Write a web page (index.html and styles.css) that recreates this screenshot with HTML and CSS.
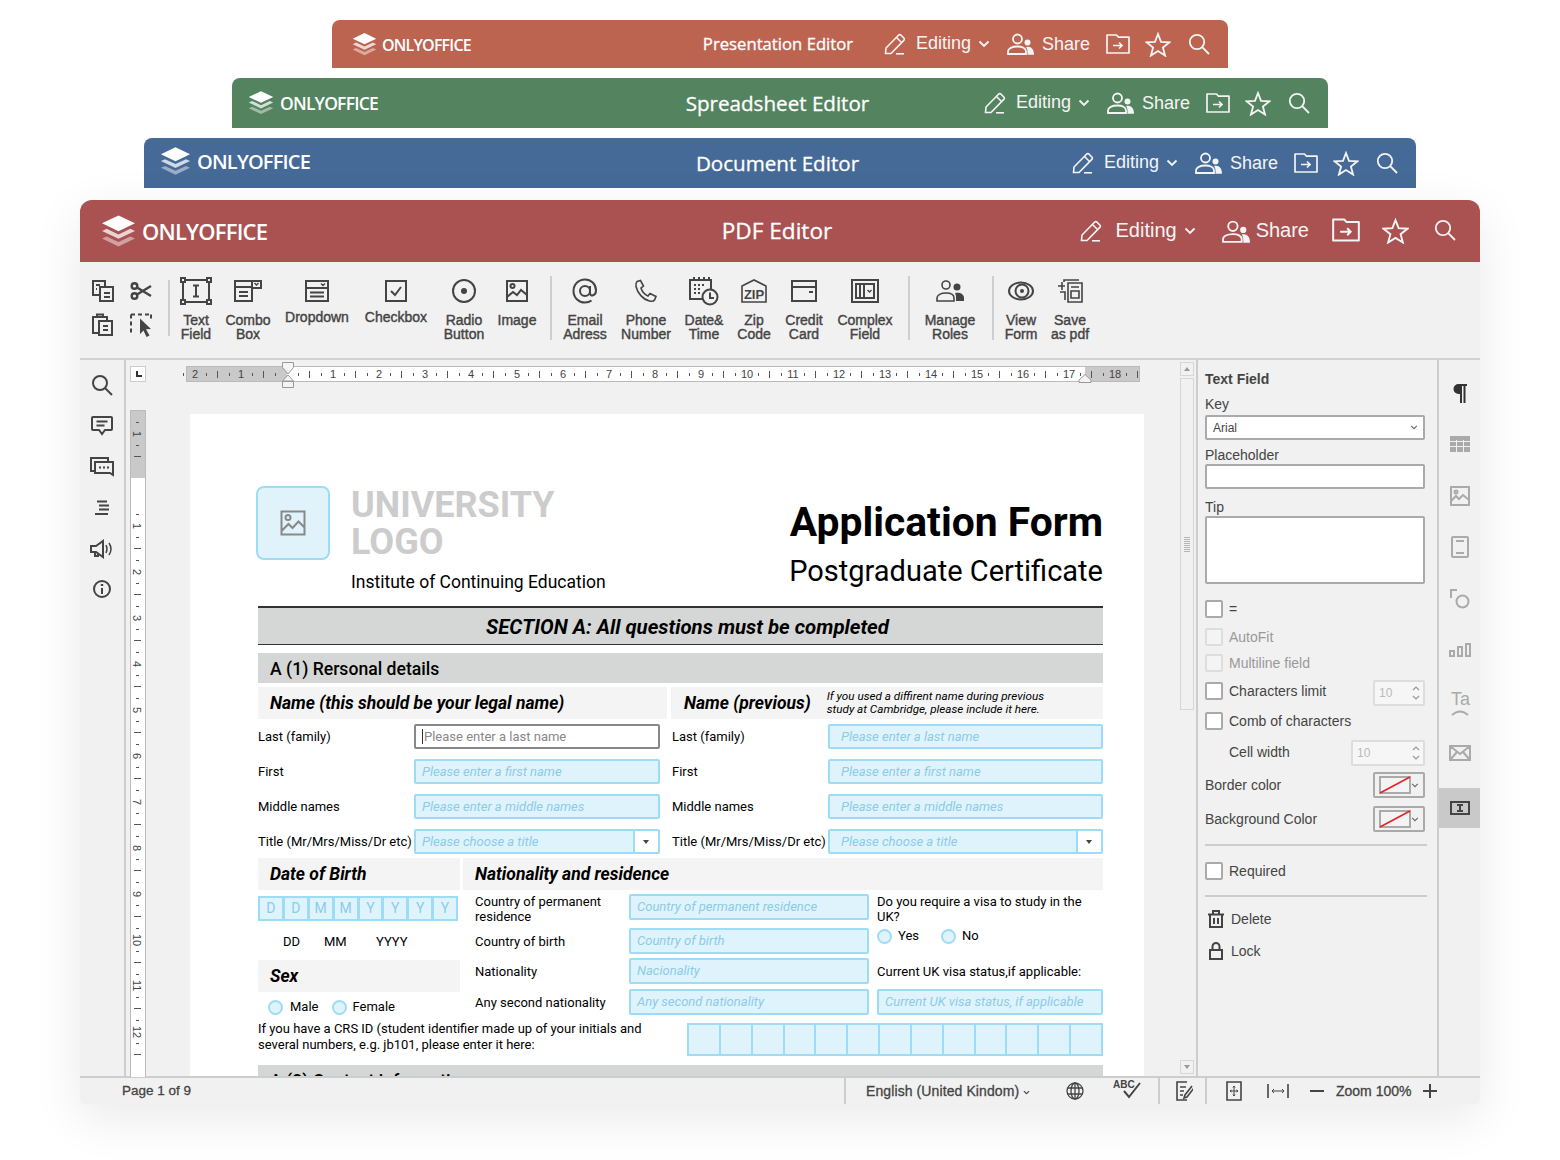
FILE: index.html
```html
<!DOCTYPE html>
<html lang="en">
<head>
    <meta charset="UTF-8">
    <title>ONLYOFFICE editors</title>
    <link rel="stylesheet" href="styles.css">
</head>
<body>
    <svg class="sprite" xmlns="http://www.w3.org/2000/svg">
        <symbol id="i-logo" viewBox="0 0 34 31">
            <path fill="#fff" d="M17 0 33 7.6 17 15.2 1 7.6z"/>
            <path fill="#fff" opacity=".75" d="M1 15 5.5 12.9 17 18.3 28.5 12.9 33 15 17 22.6z"/>
            <path fill="#fff" opacity=".45" d="M1 22.4 5.5 20.3 17 25.7 28.5 20.3 33 22.4 17 30z"/>
        </symbol>
        <symbol id="i-pen" viewBox="0 0 22 22">
            <path fill="none" stroke="currentColor" stroke-width="1.6" d="M1.5 20.5 2 15 14.5 2.2q1.300-1.200 2.600 0l2.700 2.800q1.100 1.200 0 2.400L7 20.500zM12.500 4.500l5 5"/>
            <path fill="none" stroke="currentColor" stroke-width="1.6" d="M12 20.800h8"/>
        </symbol>
        <symbol id="i-chev" viewBox="0 0 12 8">
            <path fill="none" stroke="currentColor" stroke-width="1.800" d="M1.500 1.500 6 6l4.500-4.500"/>
        </symbol>
        <symbol id="i-people" viewBox="0 0 27 22">
            <circle cx="10.500" cy="6" r="4.500" fill="none" stroke="currentColor" stroke-width="1.800"/>
            <path fill="none" stroke="currentColor" stroke-width="1.800" d="M1 21v-2.500c0-3 4-5 9.500-5 2.500 0 4.500.4 6 1.200 1.400.8 2.500 2 2.500 3.800V21z"/>
            <circle cx="20.500" cy="9.500" r="3" fill="currentColor"/>
            <path fill="currentColor" d="M19 14c5-1.200 8 2 8 7.800h-6.500V19c0-2-.5-3.600-1.500-5z"/>
        </symbol>
        <symbol id="i-folder" viewBox="0 0 24 20">
            <path fill="none" stroke="currentColor" stroke-width="1.700" stroke-linejoin="round" d="M1 1h9.500l2 2.200H23V19H1z"/>
            <path fill="none" stroke="currentColor" stroke-width="1.700" d="M7 11.500h9M13 8.500l3 3-3 3"/>
        </symbol>
        <symbol id="i-star" viewBox="0 0 26 25">
            <path fill="none" stroke="currentColor" stroke-width="1.800" d="M13 2l3 7.800 8.500.5-6.600 5.300 2.200 8L13 19.100 5.900 23.600l2.200-8L1.500 10.300l8.500-.5z"/>
        </symbol>
        <symbol id="i-search" viewBox="0 0 22 22">
            <circle cx="9" cy="9" r="7.200" fill="none" stroke="currentColor" stroke-width="1.800"/>
            <path fill="none" stroke="currentColor" stroke-width="1.800" d="M14.200 14.200 21 21"/>
        </symbol>
    </svg>

    <div class="stage">
        <header class="bar bar-slides">
            <div class="brand"><svg class="brand-mark"><use href="#i-logo"/></svg><span class="brand-name">ONLYOFFICE</span></div>
            <div class="bar-title">Presentation Editor</div>
            <div class="bar-actions">
                <svg class="a-pen"><use href="#i-pen"/></svg><span class="a-edit">Editing</span><svg class="a-chev"><use href="#i-chev"/></svg>
                <svg class="a-people"><use href="#i-people"/></svg><span class="a-share">Share</span>
                <svg class="a-folder"><use href="#i-folder"/></svg><svg class="a-star"><use href="#i-star"/></svg><svg class="a-search"><use href="#i-search"/></svg>
            </div>
        </header>
        <header class="bar bar-cells">
            <div class="brand"><svg class="brand-mark"><use href="#i-logo"/></svg><span class="brand-name">ONLYOFFICE</span></div>
            <div class="bar-title">Spreadsheet Editor</div>
            <div class="bar-actions">
                <svg class="a-pen"><use href="#i-pen"/></svg><span class="a-edit">Editing</span><svg class="a-chev"><use href="#i-chev"/></svg>
                <svg class="a-people"><use href="#i-people"/></svg><span class="a-share">Share</span>
                <svg class="a-folder"><use href="#i-folder"/></svg><svg class="a-star"><use href="#i-star"/></svg><svg class="a-search"><use href="#i-search"/></svg>
            </div>
        </header>
        <header class="bar bar-docs">
            <div class="brand"><svg class="brand-mark"><use href="#i-logo"/></svg><span class="brand-name">ONLYOFFICE</span></div>
            <div class="bar-title">Document Editor</div>
            <div class="bar-actions">
                <svg class="a-pen"><use href="#i-pen"/></svg><span class="a-edit">Editing</span><svg class="a-chev"><use href="#i-chev"/></svg>
                <svg class="a-people"><use href="#i-people"/></svg><span class="a-share">Share</span>
                <svg class="a-folder"><use href="#i-folder"/></svg><svg class="a-star"><use href="#i-star"/></svg><svg class="a-search"><use href="#i-search"/></svg>
            </div>
        </header>

        <div class="window">
            <header class="bar bar-pdf">
                <div class="brand"><svg class="brand-mark"><use href="#i-logo"/></svg><span class="brand-name">ONLYOFFICE</span></div>
                <div class="bar-title">PDF Editor</div>
                <div class="bar-actions">
                    <svg class="a-pen"><use href="#i-pen"/></svg><span class="a-edit">Editing</span><svg class="a-chev"><use href="#i-chev"/></svg>
                    <svg class="a-people"><use href="#i-people"/></svg><span class="a-share">Share</span>
                    <svg class="a-folder"><use href="#i-folder"/></svg><svg class="a-star"><use href="#i-star"/></svg><svg class="a-search"><use href="#i-search"/></svg>
                </div>
            </header>

            <!-- toolbar -->
            <div class="toolbar">
                <div class="clip-tools">
                    <svg width="22" height="24" viewBox="0 0 22 24" class="ic"><path d="M7 16H1V2h12v5M4 6h4M4 10h1"/><path d="M8 8h13v14H8zM12 14h6M12 18h6"/></svg>
                    <svg width="22" height="24" viewBox="0 0 22 24" class="ic ic-bold"><circle cx="4.500" cy="7" r="2.800"/><circle cx="4.500" cy="17" r="2.800"/><path d="M7 8.500 21 17M7 15.500 21 7"/></svg>
                    <svg width="22" height="24" viewBox="0 0 22 24" class="ic"><path d="M6 20H1V4h14v3M5 4V1.500h6V4"/><path d="M7 8h13v14H7zM11 13h5M11 17h5"/></svg>
                    <svg width="22" height="24" viewBox="0 0 22 24" class="ic"><path stroke-dasharray="4 3" d="M1 1.500h20M1 1.500V20M21 1.500v5"/><path class="fill" d="M10 5.500l11 10.500-5 .3 3.500 6.200-3 1.500-3-6.500L10 21z"/></svg>
                </div>
                <span class="tb-sep tb-sep-first"></span>
                <div class="tools tools-fields">
                    <div class="tool">
                        <div class="tool-ic"><svg width="32" height="28" viewBox="0 0 32 28" class="ic"><path d="M4 3h24M4 25h24M3 4v20M29 4v20"/><path d="M1 1h4v4H1zM27 1h4v4h-4zM1 23h4v4H1zM27 23h4v4h-4z"/><path d="M16 9v10M13 8.500h6M13 19.500h6"/></svg></div>
                        <span class="tool-label">Text<br>Field</span>
                    </div>
                    <div class="tool">
                        <div class="tool-ic"><svg width="28" height="22" viewBox="0 0 28 22" class="ic"><path d="M1 7h17v14H1zM18 7V1h9v7h-9M5 12h9M5 16h9"/><path d="M8 1h10v6H1V1h7"/><path stroke-width="1.400" d="M20.500 3l2 2 2-2"/></svg></div>
                        <span class="tool-label">Combo<br>Box</span>
                    </div>
                    <div class="tool tool-flat">
                        <div class="tool-ic"><svg width="24" height="22" viewBox="0 0 24 22" class="ic"><path d="M1 1h22v20H1zM1 8h22M5 12.500h14M5 16.500h14"/><path stroke-width="1.400" d="M16 3.500l2 2 2-2"/></svg></div>
                        <span class="tool-label">Dropdown</span>
                    </div>
                    <div class="tool tool-flat">
                        <div class="tool-ic"><svg width="22" height="22" viewBox="0 0 22 22" class="ic"><path d="M1 1h20v20H1zM6 11l4 4 6-8"/></svg></div>
                        <span class="tool-label">Checkbox</span>
                    </div>
                    <div class="tool">
                        <div class="tool-ic"><svg width="24" height="24" viewBox="0 0 24 24" class="ic"><circle cx="12" cy="12" r="11"/><circle class="fill" cx="12" cy="12" r="3"/></svg></div>
                        <span class="tool-label">Radio<br>Button</span>
                    </div>
                    <div class="tool">
                        <div class="tool-ic"><svg width="22" height="22" viewBox="0 0 22 22" class="ic"><path d="M1 1h20v20H1zM1 17l6-5 4 3 4-5 6 5"/><circle cx="6.500" cy="6" r="2"/></svg></div>
                        <span class="tool-label">Image</span>
                    </div>
                </div>
                <span class="tb-sep"></span>
                <div class="tools tools-data">
                    <div class="tool">
                        <div class="tool-ic"><svg width="26" height="26" viewBox="0 0 26 26" class="ic"><circle cx="13" cy="13" r="5"/><path d="M18 8v7c0 4 6 3 6-2.500C24 6 19 1.500 13 1.500 6.500 1.500 1.500 6.500 1.500 13S6.500 24.500 13 24.500c2.500 0 4.500-.5 6.500-2"/></svg></div>
                        <span class="tool-label">Email<br>Adress</span>
                    </div>
                    <div class="tool">
                        <div class="tool-ic"><svg width="24" height="24" viewBox="0 0 24 24" class="ic ic-thin"><path d="M3 2.500 6.500 1.500l3 5.500-2.500 2c1 3.500 3.500 6.500 7 8l2-2.500 6 3-1.500 3.500c-1 1.500-3 1.500-5 1C9 20.500 3.500 14 2 7.500 1.700 5.500 2 3.500 3 2.500z"/></svg></div>
                        <span class="tool-label">Phone<br>Number</span>
                    </div>
                    <div class="tool">
                        <div class="tool-ic"><svg width="30" height="30" viewBox="0 0 30 30" class="ic"><path d="M13 23H1V4h21v9M5 1v3M10 1v3M15 1v3M20 1v3"/><path stroke-dasharray="2 2" d="M5 9h11M5 13h8M5 17h6"/><circle cx="21" cy="21" r="7.500"/><path d="M21 16.500V22h4"/></svg></div>
                        <span class="tool-label">Date&amp;<br>Time</span>
                    </div>
                    <div class="tool">
                        <div class="tool-ic"><svg width="26" height="26" viewBox="0 0 26 26" class="ic ic-thin"><path d="M1 8l12-6 12 6v16H1z"/><text x="13" y="21" class="ic-text">ZIP</text></svg></div>
                        <span class="tool-label">Zip<br>Code</span>
                    </div>
                    <div class="tool">
                        <div class="tool-ic"><svg width="26" height="22" viewBox="0 0 26 22" class="ic"><path d="M1 1h24v20H1zM1 7h24M18 12h4"/></svg></div>
                        <span class="tool-label">Credit<br>Card</span>
                    </div>
                    <div class="tool">
                        <div class="tool-ic"><svg width="28" height="24" viewBox="0 0 28 24" class="ic"><path d="M1 1h26v22H1zM5 5h18v14H5zM9 5v14M13 5v14"/><path stroke-width="1.400" d="M16.500 11l2 2 2-2"/></svg></div>
                        <span class="tool-label">Complex<br>Field</span>
                    </div>
                </div>
                <span class="tb-sep"></span>
                <div class="tools tools-roles">
                    <div class="tool">
                        <div class="tool-ic"><svg width="30" height="24" viewBox="0 0 30 24" class="ic ic-thin"><circle cx="11" cy="6" r="4"/><path d="M2 22v-3c0-3 4-5 9-5s8 2 8 5v3z"/><circle class="fill" cx="22" cy="8" r="3.500"/><path class="fill" d="M20 14c5-1 9 1 9 5v3h-8v-4c0-1.500-.5-3-1-4z"/></svg></div>
                        <span class="tool-label">Manage<br>Roles</span>
                    </div>
                </div>
                <span class="tb-sep"></span>
                <div class="tools tools-view">
                    <div class="tool">
                        <div class="tool-ic"><svg width="26" height="20" viewBox="0 0 26 20" class="ic"><ellipse cx="13" cy="10" rx="12" ry="8.500"/><circle cx="14" cy="10" r="6.500"/><circle class="fill" cx="14" cy="10" r="2"/></svg></div>
                        <span class="tool-label">View<br>Form</span>
                    </div>
                    <div class="tool">
                        <div class="tool-ic"><svg width="26" height="24" viewBox="0 0 26 24" class="ic ic-thin"><path d="M7 3V1h15M11 4h14v19H11zM14 8h8M14 12h8v7h-8zM1 7h7M5 3v8M3 13h5v8"/></svg></div>
                        <span class="tool-label">Save<br>as pdf</span>
                    </div>
                </div>
            </div>

            <div class="workspace">
                <nav class="left-rail">
                    <svg width="22" height="22" viewBox="0 0 22 22" class="ic"><circle cx="9" cy="9" r="7"/><path d="M14 14l7 7"/></svg>
                    <svg width="22" height="20" viewBox="0 0 22 20" class="ic"><path d="M2 1h18q1 0 1 1v11q0 1-1 1h-6l-3 4-3-4H2q-1 0-1-1V2q0-1 1-1zM5.500 5.500h11M5.500 9.500h8"/></svg>
                    <svg width="24" height="20" viewBox="0 0 24 20" class="ic"><path d="M4 14H1V1h17v3"/><path d="M5 5h18v13l-3-2H5z"/><path stroke-dasharray="2 2" d="M9 10.500h11"/></svg>
                    <svg width="16" height="16" viewBox="0 0 16 16" class="ic"><path d="M3 1.500h10M5 5.500h10M5 9.500h10M1 14h13"/></svg>
                    <svg width="24" height="20" viewBox="0 0 24 20" class="ic"><path d="M1 7h5l7-5v16l-7-5H1zM5 13v4h3v-3"/><path stroke-width="1.500" d="M16 6q2 4 0 8M19 4q4 6 0 12"/></svg>
                    <svg width="18" height="18" viewBox="0 0 18 18" class="ic"><circle cx="9" cy="9" r="8"/><path d="M9 8v6"/><path stroke-width="2.400" d="M9 4v2"/></svg>
                </nav>

                <div class="ruler-col">
                    <div class="ruler-corner"><span class="corner-mark"></span></div>
                    <div class="ruler-v">
                        <span>1</span><span></span><span>1</span><span>2</span><span>3</span><span>4</span><span>5</span><span>6</span><span>7</span><span>8</span><span>9</span><span>10</span><span>11</span><span>12</span>
                    </div>
                </div>

                <div class="doc-col">
                    <div class="ruler-h">
                        <span>2</span><span>1</span><span></span><span>1</span><span>2</span><span>3</span><span>4</span><span>5</span><span>6</span><span>7</span><span>8</span><span>9</span><span>10</span><span>11</span><span>12</span><span>13</span><span>14</span><span>15</span><span>16</span><span>17</span><span>18</span>
                        <svg class="indent-left" width="14" height="26" viewBox="0 0 14 26"><path fill="#f4f4f4" stroke="#999" d="M1.500 .5h11v5L7 12 1.500 5.500zM7 13l5.500 6h-11zM1.500 19.500h11v6h-11z"/></svg>
                        <svg class="indent-right" width="14" height="9" viewBox="0 0 14 9"><path fill="#f4f4f4" stroke="#999" d="M7 .5 13 6v2.500H1V6z"/></svg>
                    </div>

                    <!-- form page -->
                    <main class="page">
                        <div class="form-head">
                            <div class="head-left">
                                <div class="logo-box">
                                    <svg width="26" height="26" viewBox="0 0 26 26" class="logo-pic"><path d="M1.500 1.500h23v23h-23zM1.500 21l7-7 4 4 6-6.500 6 6"/><circle cx="8" cy="7.500" r="2.500"/></svg>
                                </div>
                                <div class="head-text">
                                    <div class="uni">UNIVERSITY<br>LOGO</div>
                                    <div class="institute">Institute of Continuing Education</div>
                                </div>
                            </div>
                            <div class="head-right">
                                <h1>Application Form</h1>
                                <p>Postgraduate Certificate</p>
                            </div>
                        </div>

                        <div class="section-a">SECTION A: All questions must be completed</div>
                        <div class="subsection">A (1) Rersonal details</div>

                        <div class="names">
                            <div class="names-col names-left">
                                <div class="sub-head">Name (this should be your legal name)</div>
                                <div class="f-row"><label>Last (family)</label><div class="fld fld-active"><span class="caret"></span>Please enter a last name</div></div>
                                <div class="f-row"><label>First</label><div class="fld">Please enter a first name</div></div>
                                <div class="f-row"><label>Middle names</label><div class="fld">Please enter a middle names</div></div>
                                <div class="f-row"><label>Title (Mr/Mrs/Miss/Dr etc)</label><div class="fld fld-select">Please choose a title<span class="fld-btn"></span></div></div>
                            </div>
                            <div class="names-col names-right">
                                <div class="sub-head sub-head-note">Name (previous)<small>If you used a diffirent name during previous<br>study at Cambridge, please include it here.</small></div>
                                <div class="f-row"><label>Last (family)</label><div class="fld">Please enter a last name</div></div>
                                <div class="f-row"><label>First</label><div class="fld">Please enter a first name</div></div>
                                <div class="f-row"><label>Middle names</label><div class="fld">Please enter a middle names</div></div>
                                <div class="f-row"><label>Title (Mr/Mrs/Miss/Dr etc)</label><div class="fld fld-select">Please choose a title<span class="fld-btn"></span></div></div>
                            </div>
                        </div>

                        <div class="details">
                            <div class="dob-col">
                                <div class="sub-head">Date of Birth</div>
                                <div class="dob-cells"><span>D</span><span>D</span><span>M</span><span>M</span><span>Y</span><span>Y</span><span>Y</span><span>Y</span></div>
                                <div class="dob-legend"><span>DD</span><span>MM</span><span>YYYY</span></div>
                                <div class="sub-head sex-head">Sex</div>
                                <div class="radios sex-radios"><span class="radio"></span>Male<span class="radio"></span>Female</div>
                            </div>
                            <div class="nat-col">
                                <div class="sub-head">Nationality and residence</div>
                                <div class="nat-grid">
                                    <label>Country of permanent residence</label>
                                    <div class="fld">Country of permanent residence</div>
                                    <div class="visa-q">Do you require a visa to study in the UK?</div>

                                    <label>Country of birth</label>
                                    <div class="fld">Country of birth</div>
                                    <div class="radios visa-radios"><span class="radio"></span>Yes<span class="radio"></span>No</div>

                                    <label>Nationality</label>
                                    <div class="fld">Nacionality</div>
                                    <div class="visa-q">Current UK visa status,if applicable:</div>

                                    <label>Any second nationality</label>
                                    <div class="fld">Any second nationality</div>
                                    <div class="fld">Current UK visa status, if applicable</div>
                                </div>
                            </div>
                        </div>

                        <div class="crs">
                            <p>If you have a CRS ID (student identifier made up of your initials and<br>several numbers, e.g. jb101, please enter it here:</p>
                            <div class="crs-cells"><span></span><span></span><span></span><span></span><span></span><span></span><span></span><span></span><span></span><span></span><span></span><span></span><span></span></div>
                        </div>
                        <div class="subsection subsection-next">A (2) Contact information</div>
                    </main>
                </div>

                <div class="scroll-col">
                    <span class="scroll-btn"><svg width="6" height="4" viewBox="0 0 6 4"><path fill="#999" d="M3 0l3 4H0z"/></svg></span>
                    <div class="scroll-thumb"><span class="scroll-grip"></span></div>
                    <span class="scroll-btn scroll-btn-down"><svg width="6" height="4" viewBox="0 0 6 4"><path fill="#999" d="M3 4 0 0h6z"/></svg></span>
                </div>

                <aside class="panel">
                    <div class="panel-title">Text Field</div>
                    <div class="p-label p-key">Key</div>
                    <div class="p-input p-select">Arial<svg width="8" height="5" viewBox="0 0 12 8" class="p-chev"><use href="#i-chev"/></svg></div>
                    <div class="p-label p-ph">Placeholder</div>
                    <div class="p-input"></div>
                    <div class="p-label p-tip">Tip</div>
                    <div class="p-input p-area"></div>

                    <div class="check m16"><span class="cb"></span>=</div>
                    <div class="check check-off m10"><span class="cb"></span>AutoFit</div>
                    <div class="check check-off m8"><span class="cb"></span>Multiline field</div>
                    <div class="p-row m8">
                        <div class="check check-inset"><span class="cb"></span>Characters limit</div>
                        <div class="spin spin-short">10<svg width="8" height="16" viewBox="0 0 8 16"><path d="M1 5l3-3 3 3M1 11l3 3 3-3"/></svg></div>
                    </div>
                    <div class="check m6"><span class="cb"></span>Comb of characters</div>
                    <div class="p-row m10">
                        <span class="p-indent">Cell width</span>
                        <div class="spin">10<svg width="8" height="16" viewBox="0 0 8 16"><path d="M1 5l3-3 3 3M1 11l3 3 3-3"/></svg></div>
                    </div>
                    <div class="p-row m6">
                        <span>Border color</span>
                        <div class="color-btn"><svg width="32" height="18" viewBox="0 0 32 18"><path fill="#f4f4f4" stroke="#aaa" stroke-width="2" d="M1 1h30v16H1z"/><path stroke="#e0252b" stroke-width="1.600" d="M1 17 31 1"/></svg><svg width="8" height="5" viewBox="0 0 12 8" class="p-chev"><use href="#i-chev"/></svg></div>
                    </div>
                    <div class="p-row m8">
                        <span>Background Color</span>
                        <div class="color-btn"><svg width="32" height="18" viewBox="0 0 32 18"><path fill="#f4f4f4" stroke="#aaa" stroke-width="2" d="M1 1h30v16H1z"/><path stroke="#e0252b" stroke-width="1.600" d="M1 17 31 1"/></svg><svg width="8" height="5" viewBox="0 0 12 8" class="p-chev"><use href="#i-chev"/></svg></div>
                    </div>
                    <div class="p-rule m12"></div>
                    <div class="check m16"><span class="cb"></span>Required</div>
                    <div class="p-rule m15"></div>
                    <div class="p-action m12"><svg width="16" height="18" viewBox="0 0 16 18" class="ic"><path d="M0 4.500h16M2 4.500V17h12V4.500M5 4V1h6v3M6 8v6M10 8v6"/></svg>Delete</div>
                    <div class="p-action m12"><svg width="16" height="18" viewBox="0 0 16 18" class="ic"><path d="M2 8h12v9H2zM4.500 8V4.500a3.500 3.500 0 0 1 7 0V8"/></svg>Lock</div>
                </aside>

                <nav class="right-tabs">
                    <div class="tab"><svg width="16" height="20" viewBox="0 0 16 20"><path fill="#333" d="M6.500 1H15v2h-1.500v17h-2V3H10v17H8V11H6.500a5 5 0 0 1 0-10z"/></svg></div>
                    <div class="tab"><svg width="20" height="16" viewBox="0 0 20 16" class="tab-ic"><path class="tab-fill" d="M0 0h20v16H0z"/><path stroke="#f1f1f1" stroke-width="1" d="M0 5.500h20M0 10.500h20M6.500 4v12M13.500 4v12"/></svg></div>
                    <div class="tab"><svg width="20" height="20" viewBox="0 0 20 20" class="tab-ic"><path d="M1 1h18v18H1zM1 15l5-5 3 3 4-4 6 5"/><circle cx="6" cy="6" r="1.500"/></svg></div>
                    <div class="tab"><svg width="18" height="22" viewBox="0 0 18 22" class="tab-ic"><path d="M2 1h14q1 0 1 1v18q0 1-1 1H2q-1 0-1-1V2q0-1 1-1zM5 5h8M5 17h8"/></svg></div>
                    <div class="tab"><svg width="20" height="20" viewBox="0 0 20 20" class="tab-ic"><path d="M7 1H1v8"/><circle cx="12.500" cy="12.500" r="6"/></svg></div>
                    <div class="tab"><svg width="22" height="14" viewBox="0 0 22 14" class="tab-ic"><path d="M1 8h4v5H1zM9 4h4v9H9zM17 1h4v12h-4z"/></svg></div>
                    <div class="tab"><svg width="24" height="28" viewBox="0 0 24 28" class="tab-ic"><text x="3" y="17" class="tab-text">Ta</text><path d="M4 27q8-7 16 0"/></svg></div>
                    <div class="tab"><svg width="22" height="16" viewBox="0 0 22 16" class="tab-ic"><path d="M1 1h20v14H1zM1 1l10 8 10-8M1 15l7-8M21 15l-7-8"/></svg></div>
                    <div class="tab tab-active"><svg width="20" height="14" viewBox="0 0 20 14" class="ic"><path d="M1 1h18v12H1zM7 4h6M7 10h6M10 4v6"/></svg></div>
                </nav>
            </div>

            <footer class="status">
                <span class="st-pages">Page 1 of 9</span>
                <span class="st-lang">English (United Kindom)<svg width="7" height="5" viewBox="0 0 12 8"><use href="#i-chev"/></svg></span>
                <svg width="18" height="18" viewBox="0 0 18 18" class="ic ic-globe st-globe"><circle cx="9" cy="9" r="8"/><ellipse cx="9" cy="9" rx="4" ry="8"/><path d="M9 1v16M1.500 6h15M1.500 12h15"/></svg>
                <svg width="30" height="22" viewBox="0 0 30 22" class="ic st-spell"><text x="1" y="10" class="spell-text">ABC</text><path d="M12 13l5 6L28 5"/></svg>
                <span class="st-cell st-review"><svg width="18" height="20" viewBox="0 0 18 20" class="ic ic-thin"><path d="M12 1H2v18h10M5 6h6M5 10h4M5 14h3M17 5l-7 9-1 3 3-1 7-9"/></svg></span>
                <span class="st-cell st-zoom">
                    <svg width="16" height="20" viewBox="0 0 16 20" class="ic ic-thin st-fit"><path d="M1 1h14v18H1z"/><path stroke-width="1" d="M8 5v10M4 10h8M7 6.500 8 5l1 1.500M7 13.500 8 15l1-1.500M5.500 9 4 10l1.500 1M10.500 9 12 10l-1.500 1"/></svg>
                    <svg width="22" height="14" viewBox="0 0 22 14" class="ic ic-thin st-width"><path d="M1 0v14M21 0v14"/><path stroke-width="1" d="M5 7h12M7 5 5 7l2 2M15 5l2 2-2 2"/></svg>
                    <svg width="14" height="2" viewBox="0 0 14 2" class="ic st-minus"><path d="M0 1h14"/></svg>
                    <span class="st-zoom-text">Zoom 100%</span>
                    <svg width="14" height="14" viewBox="0 0 14 14" class="ic st-plus"><path d="M0 7h14M7 0v14"/></svg>
                </span>
            </footer>
        </div>
    </div>
</body>
</html>
```
FILE: styles.css
```css
body {
    margin: 0;
    background: #fff;
    font-family: "Liberation Sans", Arial, sans-serif;
    color: #444;
}
.sprite {
    display: none;
}
.stage {
    height: 1160px;
    overflow: hidden;
    padding-top: 20px;
    box-sizing: border-box;
    display: flex;
    flex-direction: column;
    align-items: center;
}

/* title bars */
.bar {
    display: grid;
    grid-template-columns: 1fr auto 1fr;
    align-items: center;
    color: #fff;
    border-radius: 8px 8px 0 0;
    box-sizing: border-box;
    flex: none;
}
.bar svg {
    flex: none;
    display: block;
}
.brand {
    display: flex;
    align-items: center;
}
.brand-name {
    font-family: "Open Sans", sans-serif;
    font-weight: 600;
    letter-spacing: -.8px;
}
.bar-title {
    font-family: "Open Sans", sans-serif;
    font-size: 20.600px;
    margin: -1px 3px 0 0;
    -webkit-text-stroke: .3px #fff;
}
.bar-actions {
    display: flex;
    justify-content: flex-end;
    align-items: center;
    color: #f4f4f4;
    font-size: 18px;
}
.a-pen { width: 22px; height: 22px; }
.a-edit { margin: -2px 0 0 10px; }
.a-chev { width: 12px; height: 8px; margin-left: 7px; }
.a-people { width: 27px; height: 22px; margin-left: 17px; }
.a-share { margin-left: 8px; }
.a-folder { width: 24px; height: 20px; margin-left: 16px; }
.a-star { width: 26px; height: 25px; margin-left: 15px; }
.a-search { width: 22px; height: 22px; margin-left: 17px; }

.bar-slides {
    width: 896px;
    height: 48px;
    padding: 0 18px 0 20px;
    background: #bc6450;
}
.bar-slides .brand { margin-top: 1px; }
.bar-slides .brand-mark { width: 25px; height: 23px; margin-right: 5px; }
.bar-slides .brand-name { font-size: 16px; }
.bar-slides .bar-title { font-size: 16.700px; margin-right: 6px; }
.bar-cells {
    width: 1096px;
    height: 50px;
    margin-top: 10px;
    padding: 0 18px 0 16px;
    background: #54845f;
}
.bar-cells .brand-mark { width: 26px; height: 24px; margin-right: 6px; }
.bar-cells .brand-name { font-size: 17.500px; }
.bar-docs {
    width: 1272px;
    height: 50px;
    margin-top: 10px;
    padding: 0 18px 0 16px;
    background: #466a97;
}
.bar-docs .brand { margin-top: -3px; }
.bar-docs .brand-mark { width: 31px; height: 29px; margin-right: 6px; }
.bar-docs .brand-name { font-size: 20px; }

/* pdf window */
.window {
    width: 1400px;
    margin-top: 12px;
    background: #f1f1f1;
    border-radius: 12px 12px 4px 4px;
    box-shadow: 0 14px 50px rgba(0, 0, 0, .09);
    flex: none;
}
.bar-pdf {
    height: 62px;
    padding: 0 24px 0 21px;
    background: #aa5252;
    border-radius: 12px 12px 0 0;
}
.bar-pdf .brand-mark { width: 35px; height: 33px; margin-right: 6px; }
.bar-pdf .brand-name { font-size: 22px; }
.bar-pdf .bar-title { font-size: 22.600px; }
.bar-pdf .bar-actions { font-size: 20px; }
.bar-pdf .a-edit { margin-left: 13px; }
.bar-pdf .a-people { width: 28px; height: 23px; margin-left: 26px; }
.bar-pdf .a-share { margin-left: 6px; margin-top: -2px; }
.bar-pdf .a-folder { width: 28px; height: 24px; margin: -2px 0 0 23px; }
.bar-pdf .a-star { width: 27px; height: 26px; margin-left: 22px; }
.bar-pdf .a-search { margin: -2px 0 0 25px; }

/* icons */
.ic {
    flex: none;
    fill: none;
    stroke: #444;
    stroke-width: 2;
}
.ic-thin { stroke-width: 1.600; }
.ic-bold { stroke-width: 2.400; }
.ic-globe { stroke-width: 1.300; }
.ic .fill { fill: #444; stroke: none; }
.ic-text {
    font-family: "Liberation Sans", sans-serif;
    font-size: 13px;
    font-weight: 700;
    text-anchor: middle;
    fill: #444;
    stroke: none;
}

/* toolbar */
.toolbar {
    height: 98px;
    box-sizing: border-box;
    border-bottom: 2px solid #d2d2d2;
    padding: 16px 0 0 12px;
    display: flex;
    align-items: flex-start;
}
.clip-tools {
    display: grid;
    grid-template-columns: 22px 22px;
    column-gap: 16px;
    row-gap: 10px;
    margin-top: 1px;
    margin-right: 9px;
}
.tb-sep {
    width: 2px;
    height: 64px;
    margin: -2px 5px 0 7px;
    background: #cecece;
}
.tb-sep-first {
    height: 56px;
    margin-top: 2px;
}
.tools {
    display: grid;
}
.tools-fields { grid-template-columns: 42px 62px 76px 82px 54px 52px; }
.tools-data { grid-template-columns: 56px 66px 50px 50px 50px 72px; }
.tools-roles { grid-template-columns: 70px; }
.tools-view { grid-template-columns: 44px 54px; }
.tool {
    display: flex;
    flex-direction: column;
    align-items: center;
    min-width: 0;
}
.tool-ic {
    height: 26px;
    display: flex;
    align-items: center;
    justify-content: center;
}
.tool-label {
    margin-top: 9px;
    font-size: 14px;
    line-height: 14px;
    text-align: center;
    white-space: nowrap;
    -webkit-text-stroke: .4px #444;
}
.tool-flat .tool-label { margin-top: 6px; }

/* workspace */
.workspace {
    height: 716px;
    display: flex;
}
.left-rail {
    width: 44px;
    flex: none;
    border-right: 2px solid #cdcdcd;
    padding-top: 5px;
    display: grid;
    grid-auto-rows: 40.800px;
    align-content: start;
    justify-items: center;
    align-items: center;
}
.ruler-col {
    width: 60px;
    padding-left: 4px;
    flex: none;
}
.ruler-corner {
    width: 14px;
    height: 14px;
    margin-top: 6px;
    background: #fff;
    border: 1px solid #ccc;
    position: relative;
}
.corner-mark {
    position: absolute;
    left: 5px;
    top: 4px;
    width: 4px;
    height: 4px;
    border-left: 2px solid #333;
    border-bottom: 2px solid #333;
}
.ruler-v {
    width: 14px;
    height: 666px;
    margin-top: 28px;
    overflow: hidden;
    border: 1px solid #bbb;
    border-bottom: 0;
    background: linear-gradient(#c9c9c9 67px, #fff 67px);
}
.ruler-v span {
    display: flex;
    align-items: center;
    justify-content: center;
    height: 46px;
    writing-mode: vertical-rl;
    font-size: 11px;
    color: #444;
    background:
        linear-gradient(#555, #555) 50% 100% / 7px 1px no-repeat,
        linear-gradient(#555, #555) 50% 11px / 3px 1px no-repeat,
        linear-gradient(#555, #555) 50% 34px / 3px 1px no-repeat;
}
.doc-col {
    width: 954px;
    flex: none;
    display: flex;
    flex-direction: column;
}
.ruler-h {
    position: relative;
    flex: none;
    box-sizing: border-box;
    width: 954px;
    height: 16px;
    margin: 6px 0 32px -4px;
    border: 1px solid #bbb;
    display: flex;
    background: linear-gradient(90deg, #c9c9c9 100px, #fff 100px, #fff 898px, #c9c9c9 898px);
}
.ruler-h span {
    flex: none;
    width: 46px;
    text-align: center;
    font-size: 11px;
    line-height: 14px;
    color: #444;
    background:
        linear-gradient(#555, #555) 100% 50% / 1px 7px no-repeat,
        linear-gradient(#555, #555) 11px 50% / 1px 3px no-repeat,
        linear-gradient(#555, #555) 34px 50% / 1px 3px no-repeat;
}
.ruler-h span:first-child {
    margin-left: -15px;
}
.indent-left {
    position: absolute;
    left: 94px;
    top: -5px;
}
.indent-right {
    position: absolute;
    left: 891px;
    top: 7px;
}

/* form page */
.page {
    flex: 1;
    min-height: 0;
    overflow: hidden;
    background: #fff;
    padding: 73px 41px 0 68px;
    font-family: Roboto, sans-serif;
    color: #000;
    font-size: 13px;
}
.form-head {
    height: 119px;
    display: flex;
    justify-content: space-between;
}
.head-left {
    display: flex;
    gap: 21px;
    margin-left: -2px;
}
.logo-box {
    width: 74px;
    height: 74px;
    margin-top: -1px;
    box-sizing: border-box;
    border: 2px solid #9ddcf5;
    border-radius: 8px;
    background: #e0f3fb;
    display: flex;
    align-items: center;
    justify-content: center;
}
.logo-pic {
    fill: none;
    stroke: #888;
    stroke-width: 2;
}
.uni {
    font-size: 36px;
    line-height: 37px;
    font-weight: 700;
    color: #ccc;
}
.institute {
    margin-top: 10px;
    font-size: 17.500px;
    line-height: 22px;
}
.head-right {
    padding-top: 11px;
    text-align: right;
}
.head-right h1 {
    margin: 0;
    font-size: 40.800px;
    line-height: 48px;
    font-weight: 700;
}
.head-right p {
    margin: 7px 0 0;
    font-size: 29px;
    line-height: 36px;
}
.section-a {
    height: 36px;
    box-sizing: content-box;
    padding-left: 14px;
    border-top: 2px solid #333;
    border-bottom: 1px solid #333;
    background: #d4d7d6;
    text-align: center;
    font-size: 20.400px;
    line-height: 38px;
    font-weight: 700;
    font-style: italic;
}
.subsection {
    height: 30px;
    margin-top: 8px;
    padding-left: 12px;
    background: #d4d7d6;
    font-size: 17.600px;
    line-height: 32px;
    font-weight: 500;
}
.subsection-next {
    margin-top: 9px;
}
.names {
    margin-top: 4px;
    display: grid;
    grid-template-columns: 409px 432px;
    column-gap: 4px;
}
.names-col {
    display: flex;
    flex-direction: column;
    gap: 10px;
}
.names-col .sub-head {
    margin-bottom: -5px;
}
.sub-head {
    height: 32px;
    padding-left: 12px;
    background: #f4f4f4;
    font-size: 17.500px;
    line-height: 33px;
    font-weight: 700;
    font-style: italic;
}
.sub-head-note {
    display: flex;
    padding-left: 13px;
}
.sub-head-note small {
    margin: 3px 0 0 16px;
    font-size: 11.700px;
    line-height: 13px;
    font-weight: 400;
}
.f-row {
    display: flex;
    align-items: center;
}
.names-left .f-row { padding-right: 7px; }
.f-row label {
    flex: none;
    width: 156px;
    white-space: nowrap;
}
.names-right .f-row label {
    width: 156px;
    padding-left: 1px;
}
.fld {
    flex: 1;
    position: relative;
    height: 25px;
    box-sizing: border-box;
    min-width: 0;
    border: 2px solid #9ddcf5;
    border-radius: 2px;
    background: #dff3fc;
    padding-left: 6px;
    font-size: 13px;
    line-height: 21px;
    font-style: italic;
    color: #8ccbe8;
    white-space: nowrap;
    overflow: hidden;
}
.names-right .fld { padding-left: 11px; }
.fld-active {
    background: #fff;
    border-color: #888;
    font-style: normal;
    color: #888;
}
.caret {
    display: inline-block;
    width: 1px;
    height: 15px;
    margin-right: 1px;
    vertical-align: -3px;
    background: #333;
}
.fld-btn {
    position: absolute;
    right: 0;
    top: 0;
    bottom: 0;
    width: 23px;
    background: #fff;
    border-left: 2px solid #9ddcf5;
}
.fld-btn::after {
    content: "";
    position: absolute;
    left: 8px;
    top: 9px;
    border: 3px solid transparent;
    border-top: 4px solid #444;
    border-bottom: 0;
}
.details {
    margin-top: 4px;
    display: grid;
    grid-template-columns: 202px 640px;
    column-gap: 3px;
}
.dob-cells {
    width: 199px;
    margin-top: 6px;
    display: grid;
    grid-template-columns: repeat(8, 1fr);
}
.dob-cells span {
    height: 25px;
    box-sizing: border-box;
    border: 2px solid #9ddcf5;
    margin-right: -1px;
    background: #dff3fc;
    color: #8ccbe8;
    text-align: center;
    line-height: 21px;
    font-size: 14px;
}
.dob-legend {
    margin-top: 13px;
    padding-left: 25px;
    display: grid;
    grid-template-columns: 41px 52px auto;
    line-height: 16px;
}
.sex-head {
    margin-top: 10px;
}
.radios {
    display: flex;
    align-items: center;
    line-height: 16px;
}
.radio {
    width: 15px;
    height: 15px;
    box-sizing: border-box;
    border: 2px solid #9ddcf5;
    border-radius: 50%;
    background: #dff3fc;
    margin: 0 6px 0 14px;
    flex: none;
}
.sex-radios {
    margin-top: 7px;
}
.sex-radios .radio {
    margin-right: 5px;
}
.sex-radios .radio:first-child {
    margin-left: 10px;
    margin-right: 7px;
}
.nat-grid {
    margin-top: 4px;
    padding-left: 12px;
    display: grid;
    grid-template-columns: 154px 240px 234px;
    grid-template-rows: 34px 30px 31px 26px;
    align-items: start;
    line-height: 15px;
}
.nat-grid label,
.visa-q {
    min-height: 26px;
    display: flex;
    align-items: center;
}
.nat-grid .fld {
    height: 26px;
    line-height: 22px;
}
.nat-grid > :nth-child(3n) {
    margin-left: 8px;
}
.visa-radios .radio {
    margin-left: 22px;
}
.visa-radios .radio:first-child {
    margin-left: 0;
}
.crs {
    margin-top: 6px;
    display: flex;
    justify-content: space-between;
    line-height: 16px;
}
.crs p {
    margin: 0;
}
.crs-cells {
    width: 414px;
    height: 33px;
    margin: 2px 2px 0 0;
    display: grid;
    grid-template-columns: repeat(13, 1fr);
}
.crs-cells span {
    border: 2px solid #9ddcf5;
    margin-right: -2px;
    background: #dff3fc;
}

/* scrollbar */
.scroll-col {
    width: 52px;
    flex: none;
    box-sizing: border-box;
    padding: 2px 0 0 36px;
    display: flex;
    flex-direction: column;
}
.scroll-btn {
    width: 14px;
    height: 14px;
    box-sizing: border-box;
    border: 1px solid #d6d6d6;
    display: flex;
    align-items: center;
    justify-content: center;
    flex: none;
}
.scroll-btn-down {
    margin-top: auto;
    margin-bottom: 2px;
}
.scroll-thumb {
    width: 14px;
    height: 332px;
    margin-top: 2px;
    box-sizing: border-box;
    border: 1px solid #d6d6d6;
    display: flex;
    align-items: center;
    justify-content: center;
}
.scroll-grip {
    width: 6px;
    height: 15px;
    background: repeating-linear-gradient(#b5b5b5 0 1px, transparent 1px 2px);
}

/* right panel */
.panel {
    width: 243px;
    flex: none;
    box-sizing: border-box;
    border-left: 2px solid #cdcdcd;
    border-right: 2px solid #cdcdcd;
    padding: 11px 12px 0 7px;
    font-size: 14px;
    color: #444;
}
.panel-title {
    font-weight: 700;
    line-height: 16px;
}
.p-label {
    line-height: 16px;
}
.p-key { margin-top: 9px; margin-bottom: 3px; }
.p-ph { margin-top: 7px; margin-bottom: 1px; }
.p-tip { margin-top: 10px; margin-bottom: 1px; }
.p-input {
    height: 25px;
    box-sizing: border-box;
    border: 2px solid #aaa;
    border-radius: 2px;
    background: #fff;
}
.p-select {
    display: flex;
    align-items: center;
    justify-content: space-between;
    padding: 0 5px 0 6px;
    font-size: 12px;
}
.p-chev {
    color: #666;
    flex: none;
}
.p-area {
    height: 68px;
}
.check {
    display: flex;
    align-items: center;
    height: 18px;
    gap: 6px;
    line-height: 18px;
}
.cb {
    width: 18px;
    height: 18px;
    box-sizing: border-box;
    border: 2px solid #aaa;
    border-radius: 2px;
    background: #fff;
    flex: none;
}
.check-off {
    color: #999;
}
.check-off .cb {
    border-color: #ddd;
    background: #f4f4f4;
}
.check-inset {
    margin-top: 2px;
}
.p-row {
    display: flex;
    justify-content: space-between;
    align-items: center;
    height: 26px;
}
.p-row:has(.check-inset) {
    align-items: flex-start;
}
.p-indent {
    padding-left: 24px;
    margin-top: -2px;
}
.spin {
    width: 74px;
    height: 26px;
    box-sizing: border-box;
    border: 2px solid #ddd;
    border-radius: 2px;
    background: #f6f6f6;
    color: #bbb;
    font-size: 12px;
    padding: 0 3px 0 4px;
    display: flex;
    align-items: center;
    justify-content: space-between;
}
.spin-short {
    width: 52px;
}
.spin svg {
    fill: none;
    stroke: #999;
    stroke-width: 1.200;
}
.color-btn {
    width: 52px;
    height: 26px;
    box-sizing: border-box;
    border: 2px solid #aaa;
    border-radius: 2px;
    padding: 0 4px;
    display: flex;
    align-items: center;
    justify-content: space-between;
}
.p-rule {
    width: 222px;
    height: 2px;
    background: #cdcdcd;
}
.p-action {
    display: flex;
    align-items: center;
    gap: 7px;
    height: 20px;
    padding-left: 3px;
}
.m6 { margin-top: 6px; }
.m8 { margin-top: 8px; }
.m10 { margin-top: 10px; }
.m12 { margin-top: 12px; }
.m15 { margin-top: 15px; }
.m16 { margin-top: 16px; }

/* right tabs */
.right-tabs {
    flex: 1;
    padding-top: 7px;
}
.tab {
    height: 51.500px;
    display: flex;
    align-items: center;
    justify-content: center;
}
.tab-ic {
    fill: none;
    stroke: #aaa;
    stroke-width: 2;
}
.tab-fill {
    fill: #aaa;
    stroke: none;
}
.tab-text {
    font-family: "Liberation Sans", sans-serif;
    font-size: 18px;
    fill: #aaa;
    stroke: none;
}
.tab-active {
    height: 40px;
    margin-top: 9px;
    background: #c9c9c9;
}

/* status bar */
.status {
    height: 28px;
    box-sizing: border-box;
    border-top: 2px solid #cdcdcd;
    display: flex;
    align-items: center;
    font-size: 14px;
    -webkit-text-stroke: .3px #444;
}
.st-pages {
    width: 766px;
    flex: none;
    padding-left: 42px;
    box-sizing: border-box;
    border-right: 2px solid #cdcdcd;
    height: 100%;
    font-size: 13.500px;
    line-height: 26px;
}
.st-lang {
    margin-left: 20px;
    display: flex;
    align-items: center;
    gap: 4px;
    width: 200px;
    letter-spacing: .1px;
}
.st-lang svg {
    color: #444;
    margin-top: 2px;
}
.st-spell {
    margin: -4px 0 0 28px;
}
.spell-text {
    font-family: "Liberation Sans", sans-serif;
    font-size: 10px;
    font-weight: 700;
    fill: #444;
    stroke: none;
}
.st-cell {
    height: 100%;
    display: flex;
    align-items: center;
    box-sizing: border-box;
    border-left: 2px solid #cdcdcd;
}
.st-review {
    width: 47px;
    margin-left: 16px;
    padding-left: 15px;
}
.st-zoom {
    padding-left: 19px;
}
.st-width {
    margin-left: 25px;
}
.st-minus {
    margin-left: 21px;
}
.st-zoom-text {
    margin-left: 12px;
}
.st-plus {
    margin-left: 12px;
}
```
